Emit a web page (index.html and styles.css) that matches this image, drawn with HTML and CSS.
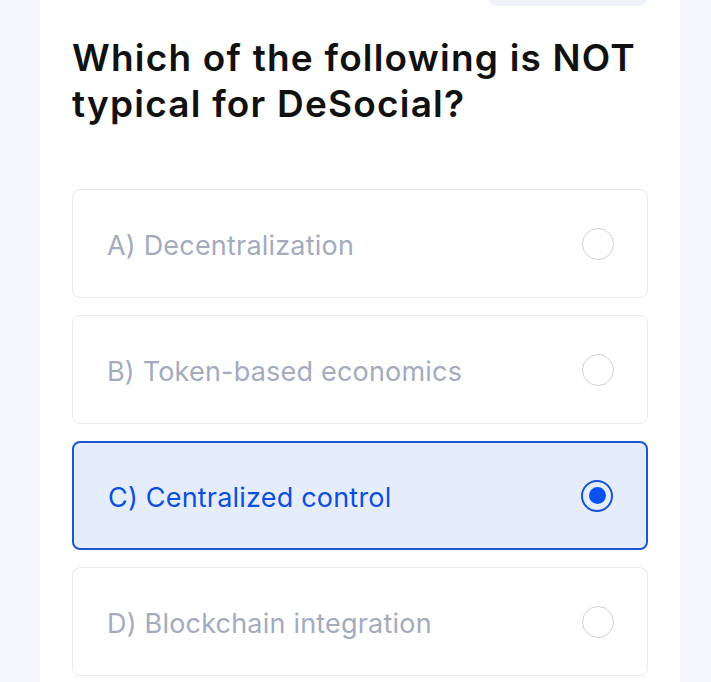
FILE: index.html
```html
<!DOCTYPE html>
<html>
<head>
<meta charset="utf-8">
<link rel="stylesheet" href="styles.css">
</head>
<body>
<div class="page">
  <div class="card">
    <div class="top-row"><div class="pill"></div></div>
    <h1 class="question">Which of the following is NOT typical for DeSocial?</h1>
    <div class="options">
      <div class="option"><span class="label">A) Decentralization</span><span class="radio"></span></div>
      <div class="option"><span class="label">B) Token-based economics</span><span class="radio"></span></div>
      <div class="option selected"><span class="label">C) Centralized control</span><span class="radio"><span class="dot"></span></span></div>
      <div class="option"><span class="label">D) Blockchain integration</span><span class="radio"></span></div>
    </div>
  </div>
</div>
</body>
</html>
```
FILE: styles.css
```css
* { box-sizing: border-box; }
html, body { margin: 0; padding: 0; }
body {
  background: #f4f5f9;
  font-family: Inter, "Noto Sans", sans-serif;
  width: 711px;
  height: 682px;
  overflow: hidden;
}
.page { padding-left: 40px; }
.card {
  width: 640px;
  height: 682px;
  background: #ffffff;
  padding: 0 32px;
}
.top-row {
  display: flex;
  justify-content: flex-end;
  height: 6px;
}
.pill {
  width: 160px;
  height: 36px;
  margin-top: -30px;
  border-radius: 10px;
  background: #eef3f9;
}
.question {
  margin: 29px 0 0;
  font-size: 37px;
  line-height: 46px;
  font-weight: 600;
  color: #111111;
  letter-spacing: 1.2px;
}
.options {
  margin-top: 62px;
  display: flex;
  flex-direction: column;
  gap: 17px;
}
.option {
  height: 109px;
  border: 1.5px solid #e8eaee;
  border-radius: 8px;
  display: flex;
  align-items: center;
  justify-content: space-between;
  padding: 0 33px 0 34px;
}
.label {
  margin-top: 4px;
  font-size: 27px;
  color: #a3abbf;
  font-weight: 400;
  letter-spacing: 0.2px;
}
.radio {
  width: 32px;
  height: 32px;
  border: 1.5px solid #cdd1da;
  border-radius: 50%;
  display: flex;
  align-items: center;
  justify-content: center;
}
.option.selected {
  background: #e5edfc;
  border: 2px solid #1a56d6;
}
.option.selected .label { color: #0b4fe0; }
.option.selected .radio { border: 2px solid #1553d8; }
.dot {
  width: 17px;
  height: 17px;
  border-radius: 50%;
  background: #0a52f0;
}
```
